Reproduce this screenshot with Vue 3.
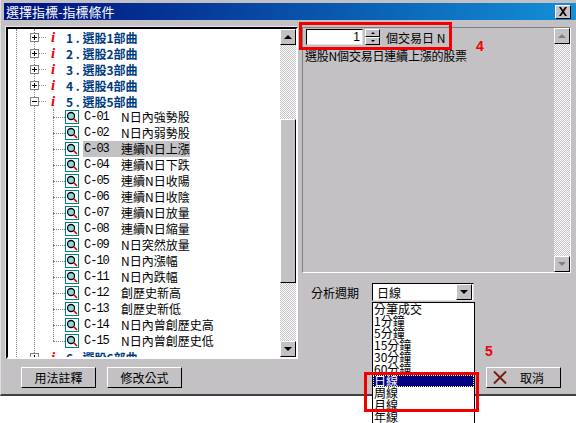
<template>
  <div class="dialog">
    <div class="titlebar">
      <span class="titlebar__text">選擇指標-指標條件</span>
      <button class="titlebar__close" aria-label="關閉">
        <svg width="10" height="9" viewBox="0 0 10 9"><path d="M1 0h2l2 3 2-3h2L6 4.500 9 9H7L5 6 3 9H1l3-4.500z" fill="#000"/></svg>
      </button>
    </div>

    <div class="body">
      <div class="left">
        <div class="tree">
          <div class="tree__line tree__line--outer"></div>
          <div class="tree__line tree__line--root"></div>
          <div class="tree__line tree__line--sub"></div>
          <div class="tree__rows">
            <template v-for="group in groups" :key="group.id">
              <div class="group">
                <span class="expander">
                  <i class="expander__h"></i>
                  <i v-if="!group.open" class="expander__v"></i>
                </span>
                <span class="group__dots"></span>
                <span class="group__i">i</span>
                <span class="group__label">{{ group.id }} . 選股{{ group.id }}部曲</span>
              </div>
              <template v-if="group.open">
                <div v-for="item in items" :key="item.code" class="item">
                  <span class="item__dots"></span>
                  <svg class="item__icon" width="14" height="14" viewBox="0 0 14 14">
                    <rect x="0.500" y="0.500" width="13" height="13" fill="#fff" stroke="#008080"/>
                    <circle cx="6" cy="6" r="3.500" fill="#8fd8e8" stroke="#000" stroke-width="1.300"/>
                    <path d="M8.500 8.500l3.500 3.500" stroke="#d00000" stroke-width="1.600"/>
                  </svg>
                  <span class="item__code" :class="{ selected: item.code === 'C-03' }">{{ item.code }}</span>
                  <span class="item__name" :class="{ selected: item.code === 'C-03' }">{{ item.name }}</span>
                </div>
              </template>
            </template>
          </div>
          <div class="scrollbar">
            <span class="scrollbar__btn"><i class="arrow arrow--up"></i></span>
            <div class="scrollbar__track">
              <div class="scrollbar__thumb"></div>
            </div>
            <span class="scrollbar__btn"><i class="arrow arrow--down"></i></span>
          </div>
        </div>
        <div class="left__buttons">
          <button class="btn">用法註釋</button>
          <button class="btn">修改公式</button>
        </div>
      </div>

      <div class="right">
        <div class="panel">
          <div class="panel__content">
            <div class="param">
              <div class="spin">1</div>
              <div class="spin__btns">
                <span class="spin__btn"><i class="arrow arrow--tiny-up"></i></span>
                <span class="spin__btn"><i class="arrow arrow--tiny-down"></i></span>
              </div>
              <span class="param__label">個交易日 N</span>
            </div>
            <div class="panel__desc">選股N個交易日連續上漲的股票</div>
          </div>
          <div class="scrollbar scrollbar--off">
            <span class="scrollbar__btn"><i class="arrow arrow--up arrow--off"></i></span>
            <div class="scrollbar__track"></div>
            <span class="scrollbar__btn"><i class="arrow arrow--down arrow--off"></i></span>
          </div>
        </div>
        <div class="period">
          <span class="period__label">分析週期</span>
          <div class="combo">
            <span class="combo__value">日線</span>
            <span class="scrollbar__btn"><i class="arrow arrow--down"></i></span>
          </div>
        </div>
        <div class="right__footer">
          <button class="btn btn--cancel">
            <svg width="14" height="13" viewBox="0 0 14 13"><path d="M1 0.500l12 12M13 0.500l-12 12" stroke="#7a1c10" stroke-width="2"/></svg>
            <span>取消</span>
          </button>
        </div>
      </div>
    </div>
  </div>

  <ul class="dropdown">
    <li v-for="p in periods" :key="p" :class="{ active: p === '日線' }">{{ p }}</li>
  </ul>

  <div class="mark mark--param"></div>
  <div class="mark mark--list"></div>
  <span class="note note--4">4</span>
  <span class="note note--5">5</span>
</template>

<script setup>
const groups = [
  { id: 1, open: false },
  { id: 2, open: false },
  { id: 3, open: false },
  { id: 4, open: false },
  { id: 5, open: true },
  { id: 6, open: false }
]

const items = [
  { code: 'C-01', name: 'N日內強勢股' },
  { code: 'C-02', name: 'N日內弱勢股' },
  { code: 'C-03', name: '連續N日上漲' },
  { code: 'C-04', name: '連續N日下跌' },
  { code: 'C-05', name: '連續N日收陽' },
  { code: 'C-06', name: '連續N日收陰' },
  { code: 'C-07', name: '連續N日放量' },
  { code: 'C-08', name: '連續N日縮量' },
  { code: 'C-09', name: 'N日突然放量' },
  { code: 'C-10', name: 'N日內漲幅' },
  { code: 'C-11', name: 'N日內跌幅' },
  { code: 'C-12', name: '創歷史新高' },
  { code: 'C-13', name: '創歷史新低' },
  { code: 'C-14', name: 'N日內曾創歷史高' },
  { code: 'C-15', name: 'N日內曾創歷史低' }
]

const periods = ['分筆成交', '1分鐘', '5分鐘', '15分鐘', '30分鐘', '60分鐘', '日線', '周線', '月線', '年線']
</script>

<style>
html, body {
  margin: 0;
  background: #fff;
}
#app {
  position: relative;
  width: 576px;
  height: 423px;
  overflow: hidden;
  font-family: "Noto Sans CJK TC", "Liberation Sans", sans-serif;
  font-size: 12px;
}
</style>

<style scoped>
.dialog {
  width: 576px;
  height: 396px;
  box-sizing: border-box;
  padding: 3px 0 0 3px;
  background: #c3c1c4;
  border-left: 1px solid #dfdfdf;
  border-bottom: 2px solid #404040;
  display: flex;
  flex-direction: column;
}
.titlebar {
  height: 17px;
  flex: none;
  display: flex;
  align-items: center;
  justify-content: space-between;
  padding: 0 5px 0 2px;
  background: linear-gradient(90deg, #00107e 0%, #0a5cb0 60%, #1290d8 100%);
}
.titlebar__text {
  color: #fff;
  font-size: 13px;
  line-height: 17px;
}
.titlebar__close {
  width: 16px;
  height: 14px;
  padding: 0;
  background: #c3c1c4;
  border: 1px solid;
  border-color: #fff #000 #000 #fff;
  display: flex;
  align-items: center;
  justify-content: center;
}
.body {
  flex: 1;
  display: flex;
  gap: 4px;
  padding: 7px 0 0 2px;
  min-height: 0;
}
.left {
  width: 292px;
  display: flex;
  flex-direction: column;
}
.tree {
  position: relative;
  height: 332px;
  flex: none;
  box-sizing: border-box;
  background: #fff;
  border: 2px solid;
  border-color: #000 #fff #fff #000;
  box-shadow: -1px -1px 0 #e8e8e8;
  overflow: hidden;
}
.group,
.item {
  height: 16px;
  display: flex;
  align-items: center;
  white-space: nowrap;
  position: relative;
  z-index: 1;
}
.group {
  padding-left: 22px;
}
.expander {
  position: relative;
  width: 9px;
  height: 9px;
  box-sizing: border-box;
  border: 1px solid #808080;
  background: #fff;
  flex: none;
}
.expander__h,
.expander__v {
  position: absolute;
  background: #000;
}
.expander__h {
  left: 1px;
  top: 3px;
  width: 5px;
  height: 1px;
}
.expander__v {
  left: 3px;
  top: 1px;
  width: 1px;
  height: 5px;
}
.group__dots {
  width: 7px;
  border-top: 1px dotted #808080;
  flex: none;
}
.group__i {
  width: 10px;
  margin-left: 5px;
  color: #f00000;
  font-family: "Liberation Serif", serif;
  font-size: 15px;
  font-style: italic;
  font-weight: 700;
  flex: none;
}
.group__label {
  margin-left: 5px;
  color: #003b80;
  font-size: 12px;
  font-weight: 700;
}
.item {
  padding-left: 45px;
}
.item__dots {
  width: 12px;
  border-top: 1px dotted #808080;
  flex: none;
}
.item__icon {
  flex: none;
}
.item__code,
.item__name {
  height: 16px;
  line-height: 16px;
  color: #000;
}
.item__code {
  width: 32px;
  margin-left: 4px;
  padding-left: 1px;
  font-family: "Liberation Mono", monospace;
  font-size: 12px;
  letter-spacing: -1px;
}
.item__name {
  padding-left: 5px;
}
.selected {
  background: #c3c1c4;
}
.tree__line {
  position: absolute;
  border-left: 1px dotted #808080;
}
.tree__line--outer {
  left: 8px;
  top: 0;
  bottom: 0;
}
.tree__line--root {
  left: 26px;
  top: 0;
  bottom: 0;
}
.tree__line--sub {
  left: 45px;
  top: 80px;
  height: 232px;
}
.scrollbar {
  position: absolute;
  top: 0;
  right: 0;
  bottom: 0;
  width: 16px;
  display: flex;
  flex-direction: column;
  z-index: 2;
}
.scrollbar__btn {
  width: 16px;
  height: 16px;
  box-sizing: border-box;
  flex: none;
  background: #c3c1c4;
  border: 1px solid;
  border-color: #fff #000 #000 #fff;
  display: flex;
  align-items: center;
  justify-content: center;
}
.scrollbar__track {
  flex: 1;
  background: repeating-conic-gradient(#c3c1c4 0 25%, #fff 0 50%) 0 0 / 2px 2px;
  padding-top: 74px;
}
.scrollbar__thumb {
  height: 164px;
  box-sizing: border-box;
  background: #c3c1c4;
  border: 1px solid;
  border-color: #fff #000 #000 #fff;
}
.arrow {
  width: 0;
  height: 0;
  border-left: 4px solid transparent;
  border-right: 4px solid transparent;
}
.arrow--up {
  border-bottom: 4px solid #000;
}
.arrow--down {
  border-top: 4px solid #000;
}
.arrow--off.arrow--up {
  border-bottom-color: #808080;
}
.arrow--off.arrow--down {
  border-top-color: #808080;
}
.arrow--tiny-up,
.arrow--tiny-down {
  border-left-width: 2px;
  border-right-width: 2px;
}
.arrow--tiny-up {
  border-bottom: 2px solid #000;
}
.arrow--tiny-down {
  border-top: 2px solid #000;
}
.left__buttons {
  display: flex;
  gap: 11px;
  padding: 8px 0 0 15px;
}
.btn {
  width: 75px;
  height: 21px;
  padding: 0;
  background: #c3c1c4;
  border: 1px solid;
  border-color: #fff #000 #000 #fff;
  color: #000;
  font-family: "Noto Sans CJK TC", "Liberation Sans", sans-serif;
  font-size: 12px;
  line-height: 18px;
}
.right {
  width: 269px;
  display: flex;
  flex-direction: column;
}
.panel {
  position: relative;
  height: 246px;
  box-sizing: border-box;
  border: 1px solid;
  border-color: #808080 #fff #fff #808080;
  flex: none;
}
.panel__content {
  padding: 1px 0 0 2px;
}
.param {
  display: flex;
  align-items: center;
  height: 16px;
  margin-left: 1px;
}
.spin {
  width: 57px;
  height: 16px;
  box-sizing: border-box;
  padding-right: 2px;
  background: #fff;
  border: 1px solid;
  border-color: #000 #e0e0e0 #e0e0e0 #000;
  text-align: right;
  line-height: 14px;
  font-family: "Liberation Sans", sans-serif;
}
.spin__btns {
  display: flex;
  flex-direction: column;
  margin-left: 2px;
}
.spin__btn {
  width: 15px;
  height: 8px;
  box-sizing: border-box;
  background: #c3c1c4;
  border: 1px solid;
  border-color: #fff #000 #000 #fff;
  display: flex;
  align-items: center;
  justify-content: center;
}
.param__label {
  margin-left: 6px;
  white-space: nowrap;
}
.panel__desc {
  margin-top: 3px;
  line-height: 16px;
  letter-spacing: -0.2px;
  white-space: nowrap;
}
.period {
  display: flex;
  align-items: center;
  height: 18px;
  margin-top: 10px;
  padding-left: 9px;
}
.period__label {
  width: 61px;
  color: #000;
}
.combo {
  width: 102px;
  height: 18px;
  box-sizing: border-box;
  padding: 0 1px 0 4px;
  background: #fff;
  border: 1px solid;
  border-color: #000 #e0e0e0 #e0e0e0 #000;
  display: flex;
  align-items: center;
  justify-content: space-between;
}
.right__footer {
  display: flex;
  justify-content: flex-end;
  padding: 66px 10px 0 0;
}
.btn--cancel {
  display: flex;
  align-items: center;
  gap: 13px;
  padding-left: 6px;
}
.dropdown {
  position: absolute;
  left: 372px;
  top: 302px;
  width: 103px;
  box-sizing: border-box;
  height: 121px;
  margin: 0;
  padding: 0;
  list-style: none;
  background: #fff;
  border: 1px solid #000;
  border-bottom: 0;
  overflow: hidden;
  z-index: 3;
}
.dropdown li {
  height: 12px;
  line-height: 12px;
  padding-left: 1px;
  color: #000;
  font-size: 12px;
  white-space: nowrap;
}
.dropdown li.active {
  background: #000080;
  color: #fff;
  outline: 1px dotted #ffff80;
  outline-offset: -1px;
}
.mark {
  position: absolute;
  box-sizing: border-box;
  border: 3px solid #f00000;
  z-index: 4;
}
.mark--param {
  left: 299px;
  top: 22px;
  width: 153px;
  height: 28px;
}
.mark--list {
  left: 364px;
  top: 372px;
  width: 115px;
  height: 40px;
}
.note {
  position: absolute;
  color: #f00000;
  font-family: "Liberation Sans", sans-serif;
  font-size: 14px;
  font-weight: 700;
  line-height: 16px;
  z-index: 4;
}
.note--4 {
  left: 476px;
  top: 38px;
}
.note--5 {
  left: 485px;
  top: 343px;
}
</style>
